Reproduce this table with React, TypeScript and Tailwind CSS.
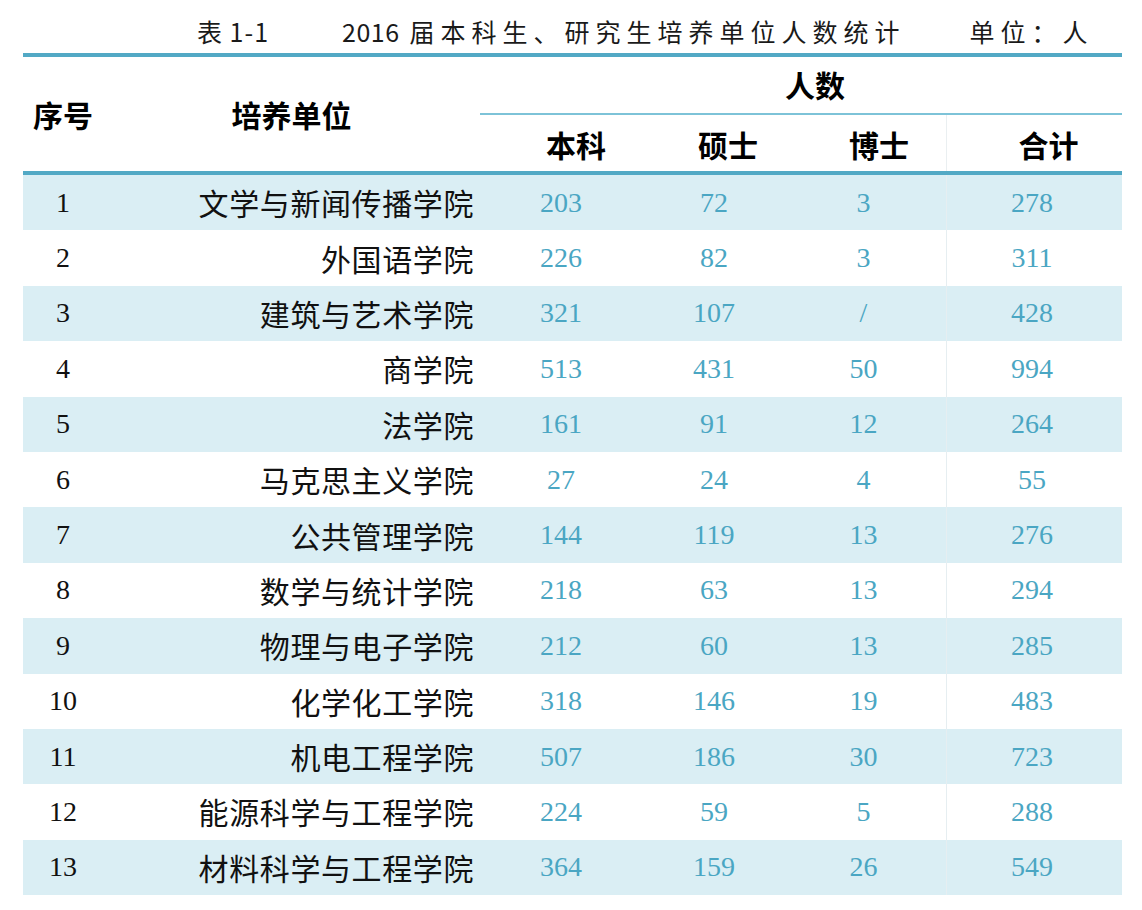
const rows: [string, string, string, string, string, string][] = [
  ["1", "文学与新闻传播学院", "203", "72", "3", "278"],
  ["2", "外国语学院", "226", "82", "3", "311"],
  ["3", "建筑与艺术学院", "321", "107", "/", "428"],
  ["4", "商学院", "513", "431", "50", "994"],
  ["5", "法学院", "161", "91", "12", "264"],
  ["6", "马克思主义学院", "27", "24", "4", "55"],
  ["7", "公共管理学院", "144", "119", "13", "276"],
  ["8", "数学与统计学院", "218", "63", "13", "294"],
  ["9", "物理与电子学院", "212", "60", "13", "285"],
  ["10", "化学化工学院", "318", "146", "19", "483"],
  ["11", "机电工程学院", "507", "186", "30", "723"],
  ["12", "能源科学与工程学院", "224", "59", "5", "288"],
  ["13", "材料科学与工程学院", "364", "159", "26", "549"],
];

const cjk = { fontFamily: '"Noto Sans CJK SC", "Noto Sans", sans-serif' };
const serif = { fontFamily: '"Liberation Serif", "Noto Sans CJK SC", serif' };

// padding that nudges each number column to sit where the source has it
const numPad = ["pr-[2px]", "", "pr-[3px]", "pr-[5px] border-l border-[#e6eef1]"];

const App = () => {
  return (
    <div className="w-[1142px] bg-white pl-[23px]">
      <div className="w-[1099px]">
        {/* caption */}
        <div
          className="flex h-[53px] items-center pt-[10px] text-[25px] leading-none text-[#1a1a1a]"
          style={cjk}
        >
          <span className="ml-[174px] w-[145px] tracking-[1px]">表 1-1</span>
          <span className="tracking-[0.5px]">2016</span>
          <span className="ml-[10px] tracking-[6px]">届本科生、研究生培养单位人数统计</span>
          <span className="ml-[64px] tracking-[6px]">单位：人</span>
        </div>

        <div className="h-[4px] bg-[#52a9c5]" />

        {/* header */}
        <div
          className="grid grid-cols-[80px_377px_164px_140px_162px_176px] grid-rows-[58px_56px] text-[30px] font-bold leading-none text-black"
          style={cjk}
        >
          <div className="row-span-2 flex items-center justify-center">序号</div>
          <div className="row-span-2 flex items-center justify-center">培养单位</div>
          <div className="col-span-4 flex items-center justify-center border-b-2 border-[#7dc3d8] pb-[2px] pl-[28px]">
            人数
          </div>
          <div className="flex items-center justify-center pl-[28px] pt-[2px]">本科</div>
          <div className="flex items-center justify-center pl-[28px] pt-[2px]">硕士</div>
          <div className="flex items-center justify-center pl-[28px] pt-[2px]">博士</div>
          <div className="flex items-center justify-center border-l border-[#eaeff1] pl-[28px] pt-[2px]">
            合计
          </div>
        </div>

        <div className="h-[4px] bg-[#52a9c5]" />

        {/* body */}
        <div>
          {rows.map((r, i) => (
            <div
              key={r[0]}
              className={
                "grid h-[55.4px] grid-cols-[80px_377px_164px_140px_162px_176px] items-stretch " +
                (i % 2 === 0 ? "bg-[#daeef4]" : "bg-white")
              }
            >
              <div className="flex items-center justify-center text-[28px] text-[#111]" style={serif}>
                {r[0]}
              </div>
              <div
                className="flex items-center justify-end pr-[6px] text-[30px] tracking-[0.6px] text-[#111]"
                style={cjk}
              >
                {r[1]}
              </div>
              {r.slice(2).map((v, j) => (
                <div
                  key={j}
                  className={"flex items-center justify-center text-[28px] text-[#4aa6c3] " + numPad[j]}
                  style={serif}
                >
                  {v}
                </div>
              ))}
            </div>
          ))}
        </div>
      </div>
    </div>
  );
};

export default App;
